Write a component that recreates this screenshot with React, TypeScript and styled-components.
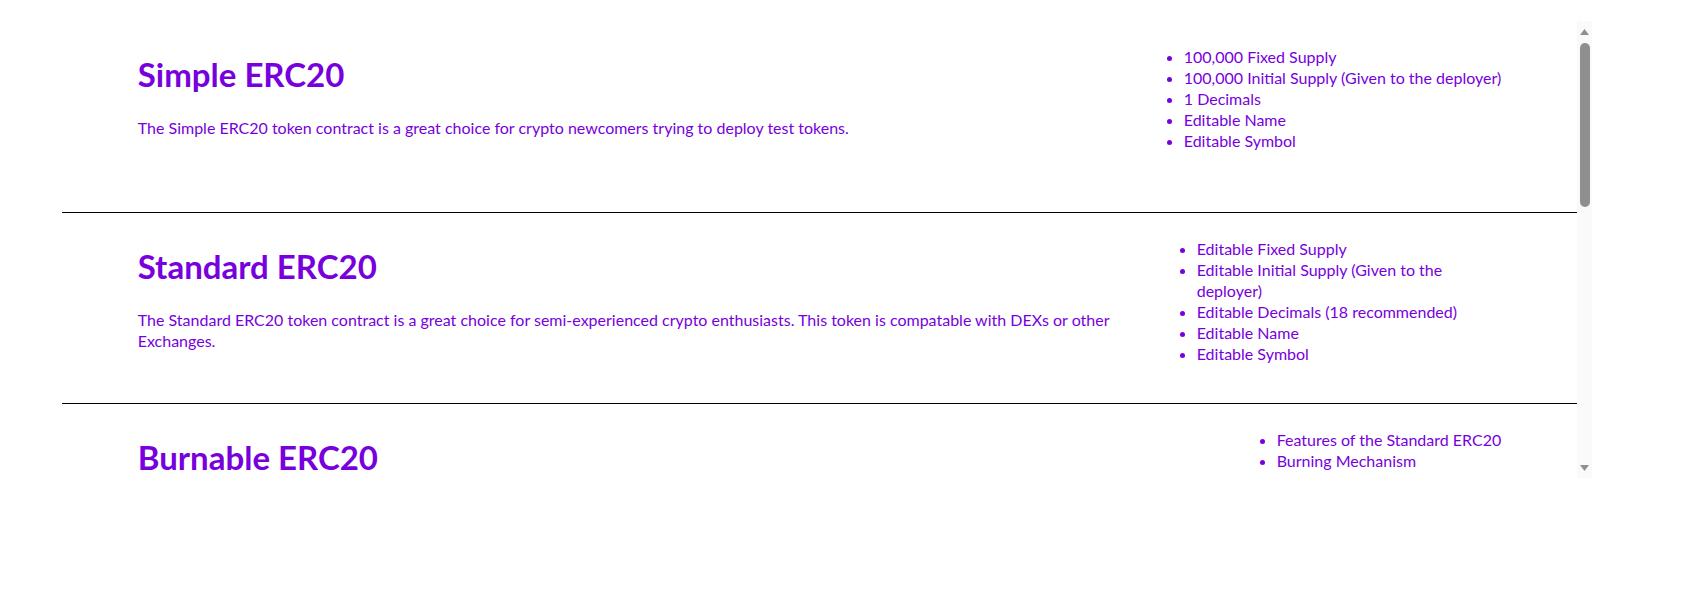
import styled, { createGlobalStyle } from "styled-components";

const GlobalStyle = createGlobalStyle`
  body {
    margin: 0;
    background: #ffffff;
    font-family: Lato, "Open Sans", sans-serif;
  }
`;

const Frame = styled.div`
  display: flex;
  margin: 21px 0 0 62px;
  width: 1530px;
  height: 457px;
`;

const TokenList = styled.div`
  flex: 1;
  min-width: 0;
  overflow-y: auto;
  scrollbar-width: none;
  color: #7700dd;
`;

const ScrollTrack = styled.div`
  display: flex;
  flex-direction: column;
  width: 15px;
  flex-shrink: 0;
  background: #fafafa;
`;

const ScrollArrow = styled.svg<{ $down?: boolean }>`
  display: block;
  width: 9px;
  height: 6px;
  margin: ${(p) => (p.$down ? "auto 0 7px 3px" : "8px 0 0 3px")};
`;

const ScrollThumb = styled.div`
  width: 10px;
  height: 164px;
  margin: 8px 0 0 3px;
  border-radius: 5px;
  background: #8f8f8f;
`;

const TokenSection = styled.section<{ $first?: boolean }>`
  display: flex;
  justify-content: space-between;
  align-items: flex-start;
  box-sizing: border-box;
  height: 191px;
  padding: 8px 5% 0;
  border-top: ${(p) => (p.$first ? "none" : "1px solid #000")};
`;

const TokenInfo = styled.div`
  min-width: 0;
`;

const TokenTitle = styled.h1`
  font-size: 33px;
  font-weight: 700;
  line-height: 43px;
  margin: 24px 0 21px;
`;

const TokenText = styled.p`
  font-size: 16px;
  line-height: 21px;
  margin: 21px 0 16px;
`;

const FeatureList = styled.ul`
  font-size: 16px;
  line-height: 21px;
  margin: 17px 0 16px;
  padding-left: 40px;
`;

const tokens = [
  {
    name: "Simple ERC20",
    description:
      "The Simple ERC20 token contract is a great choice for crypto newcomers trying to deploy test tokens.",
    features: [
      "100,000 Fixed Supply",
      "100,000 Initial Supply (Given to the deployer)",
      "1 Decimals",
      "Editable Name",
      "Editable Symbol",
    ],
  },
  {
    name: "Standard ERC20",
    description:
      "The Standard ERC20 token contract is a great choice for semi-experienced crypto enthusiasts. This token is compatable with DEXs or other Exchanges.",
    features: [
      "Editable Fixed Supply",
      "Editable Initial Supply (Given to the deployer)",
      "Editable Decimals (18 recommended)",
      "Editable Name",
      "Editable Symbol",
    ],
  },
  {
    name: "Burnable ERC20",
    description:
      "The Burnable ERC20 token contract lets holders destroy their own tokens, lowering the total supply over time.",
    features: ["Features of the Standard ERC20", "Burning Mechanism"],
  },
  {
    name: "Mintable ERC20",
    description:
      "The Mintable ERC20 token contract lets the owner create new tokens after deployment.",
    features: ["Features of the Standard ERC20", "Minting Mechanism"],
  },
  {
    name: "Pausable ERC20",
    description:
      "The Pausable ERC20 token contract lets the owner stop all transfers in an emergency.",
    features: ["Features of the Standard ERC20", "Pausing Mechanism"],
  },
  {
    name: "Capped ERC20",
    description:
      "The Capped ERC20 token contract puts a hard limit on how many tokens can ever exist.",
    features: ["Features of the Mintable ERC20", "Supply Cap"],
  },
];

export default function App() {
  return (
    <>
      <GlobalStyle />
      <Frame>
        <TokenList>
          {tokens.map((token, i) => (
            <TokenSection key={token.name} $first={i === 0}>
              <TokenInfo>
                <TokenTitle>{token.name}</TokenTitle>
                <TokenText>{token.description}</TokenText>
              </TokenInfo>
              <FeatureList>
                {token.features.map((feature) => (
                  <li key={feature}>{feature}</li>
                ))}
              </FeatureList>
            </TokenSection>
          ))}
        </TokenList>
        <ScrollTrack>
          <ScrollArrow viewBox="0 0 9 6">
            <path d="M4.5 0 L9 6 L0 6 Z" fill="#909090" />
          </ScrollArrow>
          <ScrollThumb />
          <ScrollArrow $down viewBox="0 0 9 6">
            <path d="M0 0 L9 0 L4.5 6 Z" fill="#909090" />
          </ScrollArrow>
        </ScrollTrack>
      </Frame>
    </>
  );
}
